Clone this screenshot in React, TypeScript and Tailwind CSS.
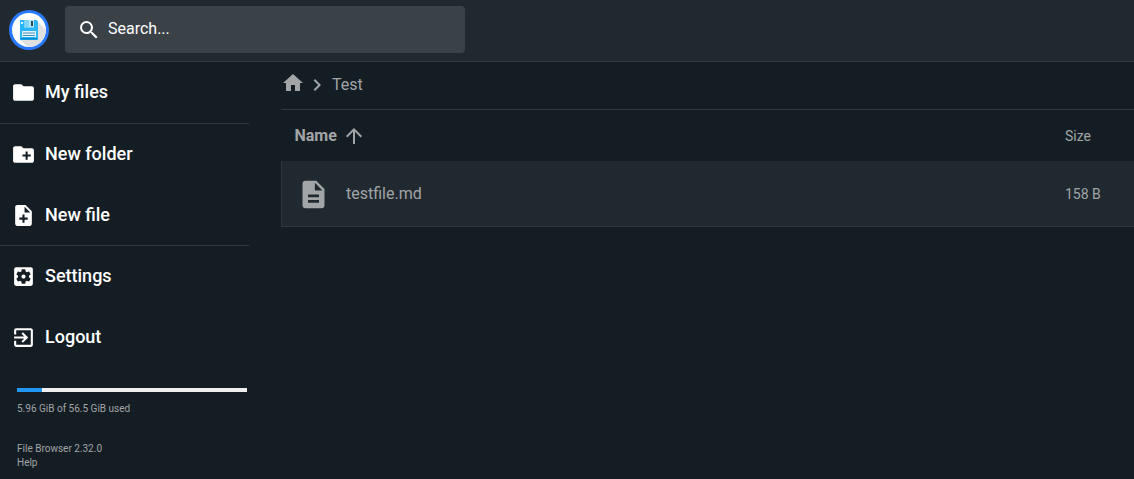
import type { ReactNode } from "react";
import type { IconType } from "react-icons";
import {
  MdArrowUpward,
  MdChevronRight,
  MdCreateNewFolder,
  MdDescription,
  MdExitToApp,
  MdFolder,
  MdHome,
  MdNoteAdd,
  MdSearch,
  MdSettingsApplications,
} from "react-icons/md";

const usage = { used: 5.96, total: 56.5 };

const files = [{ name: "testfile.md", size: "158 B" }];

function Logo() {
  return (
    <svg viewBox="0 0 40 40" className="mt-1 size-10 shrink-0" role="img" aria-label="File Browser">
      <circle cx="20" cy="20" r="20" fill="#2979ff" />
      <circle cx="20" cy="20" r="17" fill="#ffffff" />
      <path d="M28.5 11.5 36.8 19.5A17 17 0 0 1 19 37L11.5 30z" fill="#e0e0e0" />
      <path d="M11 10h16.5l1.5 1.5V30H11z" fill="#29b6f6" />
      <path d="M15.500 10H25v7.500H15.500z" fill="#b3e5fc" />
      <path d="M15.500 10H20v7.500H15.500z" fill="#81d4fa" />
      <path d="M22 11h2v5h-2z" fill="#2c4a5e" />
      <path d="M12 12h2v2h-2z" fill="#e1f5fe" />
      <path d="M13 21h14v6H13z" fill="#e1f5fe" />
      <path d="M14 22.500h12v1H14zM14 25h12v1H14z" fill="#4a8fb5" />
      <path d="M12 28h16v1.500H12z" fill="#0288d1" />
    </svg>
  );
}

function NavGroup({ children }: { children: ReactNode }) {
  return (
    <div className="flex flex-col gap-px border-b border-[#30383e] first:pb-px last:border-b-0">{children}</div>
  );
}

function NavButton({ icon: Icon, label }: { icon: IconType; label: string }) {
  return (
    <button
      type="button"
      className="flex h-15 w-full items-center gap-[9px] px-[11px] text-left text-lg font-medium text-white"
    >
      <Icon className="size-[25px] shrink-0" />
      <span>{label}</span>
    </button>
  );
}

function Sidebar() {
  return (
    <aside className="w-[249px] shrink-0">
      <nav>
        <NavGroup>
          <NavButton icon={MdFolder} label="My files" />
        </NavGroup>
        <NavGroup>
          <NavButton icon={MdCreateNewFolder} label="New folder" />
          <NavButton icon={MdNoteAdd} label="New file" />
        </NavGroup>
        <NavGroup>
          <NavButton icon={MdSettingsApplications} label="Settings" />
          <NavButton icon={MdExitToApp} label="Logout" />
        </NavGroup>
      </nav>
      <div className="mt-[21px] pr-0.5 pl-[17px] text-[10px] leading-[14px] text-[#a1a5a7]">
        <div
          role="progressbar"
          aria-label="Disk usage"
          aria-valuenow={usage.used}
          aria-valuemin={0}
          aria-valuemax={usage.total}
          className="h-1 bg-[#eeeeee]"
        >
          <div className="h-full bg-[#2196f3]" style={{ width: `${Math.ceil((usage.used / usage.total) * 100)}%` }} />
        </div>
        <p className="mt-2.5">
          {usage.used} GiB of {usage.total} GiB used
        </p>
        <p className="mt-[26px]">File Browser 2.32.0</p>
        <a href="#help" className="block">
          Help
        </a>
      </div>
    </aside>
  );
}

export default function App() {
  return (
    <div className="min-h-screen bg-[#141d24] font-['Roboto',sans-serif] text-[#a1a5a7]">
      <header className="flex h-[62px] items-start gap-4 border-b border-[#30383e] bg-[#20292f] px-[9px] pt-1.5">
        <Logo />
        <label className="flex h-[47px] w-full max-w-[400px] items-center gap-[7px] rounded bg-[#3b4247] px-3 text-white">
          <MdSearch className="size-6 shrink-0" />
          <input
            type="text"
            aria-label="Search"
            placeholder="Search..."
            className="min-w-0 flex-1 bg-transparent pb-0.5 text-base text-white outline-none placeholder:text-white"
          />
        </label>
      </header>
      <div className="flex gap-8">
        <Sidebar />
        <main className="min-w-0 flex-1">
          <nav aria-label="Breadcrumb" className="flex h-12 items-center border-b border-[#30383e] pb-0.5">
            <a href="#home" aria-label="Home" className="pb-1">
              <MdHome className="size-6" />
            </a>
            <MdChevronRight className="size-6" />
            <a href="#test" className="ml-[3px]">
              Test
            </a>
          </nav>
          <table className="w-full border-collapse text-left">
            <thead>
              <tr className="h-[51px]">
                <th className="py-0 pr-0 pl-[13px] font-bold">
                  <button type="button" className="flex items-center gap-[5px]">
                    Name
                    <MdArrowUpward className="size-6" />
                  </button>
                </th>
                <th className="w-[69px] p-0 text-sm font-normal">Size</th>
              </tr>
            </thead>
            <tbody>
              {files.map((file) => (
                <tr key={file.name} className="h-[65px] border-b border-l border-[#30383e] bg-[#20292f]">
                  <td className="pt-0.5 pr-0 pb-0 pl-[15px]">
                    <a href="#file" className="flex items-center gap-4">
                      <MdDescription className="size-[33px] shrink-0" />
                      {file.name}
                    </a>
                  </td>
                  <td className="px-0 pt-0.5 pb-0 text-sm">{file.size}</td>
                </tr>
              ))}
            </tbody>
          </table>
        </main>
      </div>
    </div>
  );
}
